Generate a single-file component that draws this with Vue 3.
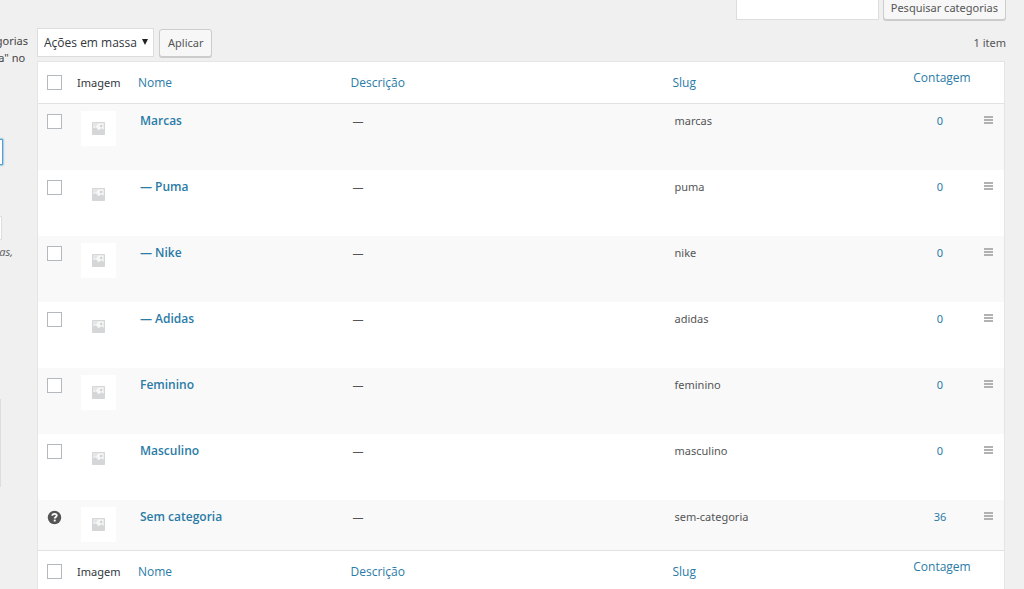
<script setup>
import { ref } from 'vue'

const bulkAction = ref('-1')
const search = ref('')
const selected = ref([])

const categories = [
  { name: 'Marcas', slug: 'marcas', count: 0 },
  { name: '— Puma', slug: 'puma', count: 0 },
  { name: '— Nike', slug: 'nike', count: 0 },
  { name: '— Adidas', slug: 'adidas', count: 0 },
  { name: 'Feminino', slug: 'feminino', count: 0 },
  { name: 'Masculino', slug: 'masculino', count: 0 },
  { name: 'Sem categoria', slug: 'sem-categoria', count: 36, isDefault: true }
]

// Select or clear every category that can be removed
function toggleAll(event) {
  selected.value = event.target.checked
    ? categories.filter((c) => !c.isDefault).map((c) => c.slug)
    : []
}
</script>

<template>
  <div class="page">
    <!-- Form column, scrolled almost out of view -->
    <aside class="form-col">
      <p class="intro">gorias<br />a" no&nbsp;</p>
      <input class="field focused" type="text" aria-label="Nome" />
      <input class="field slug-field" type="text" aria-label="Slug" />
      <p class="hint">as,</p>
      <textarea class="field area" aria-label="Descrição"></textarea>
    </aside>

    <main class="list-col">
      <form class="search-box" @submit.prevent>
        <input v-model="search" type="search" aria-label="Pesquisar categorias" />
        <button class="button" type="submit">Pesquisar categorias</button>
      </form>

      <div class="tablenav">
        <span class="select-wrap">
          <select v-model="bulkAction" aria-label="Selecionar ação em massa">
            <option value="-1">Ações em massa</option>
            <option value="delete">Excluir</option>
          </select>
        </span>
        <button class="button apply" type="button">Aplicar</button>
        <span class="total">1 item</span>
      </div>

      <table>
        <colgroup>
          <col class="c-check" />
          <col class="c-image" />
          <col class="c-name" />
          <col />
          <col class="c-slug" />
          <col class="c-count" />
          <col class="c-handle" />
        </colgroup>
        <thead>
          <tr>
            <th class="check"><input type="checkbox" aria-label="Selecionar tudo" @change="toggleAll" /></th>
            <th class="image">Imagem</th>
            <th><a href="#">Nome</a></th>
            <th><a href="#">Descrição</a></th>
            <th><a href="#">Slug</a></th>
            <th class="count"><a href="#">Contagem</a></th>
            <th></th>
          </tr>
        </thead>
        <tbody>
          <tr v-for="cat in categories" :key="cat.slug">
            <td class="check">
              <svg v-if="cat.isDefault" class="help" viewBox="0 0 14 14" role="img" aria-label="Ajuda">
                <circle cx="7" cy="7" r="6.3" fill="#555" />
                <path d="M5 5.400C5 4.100 5.800 3.600 7 3.600s2.100.6 2.100 1.600C9.100 6.500 7.200 6.500 7.200 8" fill="none" stroke="#fff" stroke-width="1.700" />
                <rect x="6.300" y="9" width="1.800" height="1.700" fill="#fff" />
              </svg>
              <input v-else v-model="selected" type="checkbox" :value="cat.slug" :aria-label="'Selecionar ' + cat.name" />
            </td>
            <td class="image">
              <span class="thumb">
                <svg viewBox="0 0 13 13" aria-hidden="true">
                  <rect width="13" height="13" rx="0.800" fill="#d5d6d8" />
                  <path d="M1.300 1.300h10.400v6.400L9.300 6.300 6.700 8.300 3.800 5.300 1.300 6.300z" fill="#f7f7f8" />
                  <path d="M1.300 1.300h5L4.300 4.300 1.300 5z" fill="#e3e4e6" />
                  <circle cx="9.200" cy="4" r="1.300" fill="#d0d1d3" />
                </svg>
              </span>
            </td>
            <td class="name"><a href="#">{{ cat.name }}</a></td>
            <td>—</td>
            <td>{{ cat.slug }}</td>
            <td class="count"><a href="#">{{ cat.count }}</a></td>
            <td class="handle">
              <svg viewBox="0 0 9 8" aria-hidden="true">
                <path d="M0 1h9M0 4h9M0 7h9" stroke="#999" stroke-width="1.700" />
              </svg>
            </td>
          </tr>
        </tbody>
        <tfoot>
          <tr>
            <th class="check"><input type="checkbox" aria-label="Selecionar tudo" @change="toggleAll" /></th>
            <th class="image">Imagem</th>
            <th><a href="#">Nome</a></th>
            <th><a href="#">Descrição</a></th>
            <th><a href="#">Slug</a></th>
            <th class="count"><a href="#">Contagem</a></th>
            <th></th>
          </tr>
        </tfoot>
      </table>
    </main>
  </div>
</template>

<style>
body {
  background: #f0f0f0;
}
</style>

<style scoped>
* {
  box-sizing: border-box;
}
.page {
  display: flex;
  height: 100vh;
  overflow: hidden;
  background: #f0f0f0;
  color: #555;
  font-family: "Noto Sans", "Open Sans", sans-serif;
  font-size: 11px;
  line-height: 17px;
}
.form-col {
  display: flex;
  flex-direction: column;
  align-items: flex-end;
  flex: 0 0 37px;
  overflow: hidden;
}
p {
  margin: 0;
}
.intro {
  margin-top: 32px;
  padding-right: 9px;
  text-align: right;
  color: #444;
}
.field {
  width: 100px;
  height: 26px;
  margin: 73px 34px 0 0;
  border: 1px solid #ddd;
  background: #fff;
}
.focused {
  border-color: #5b9dd9;
  box-shadow: 0 0 2px #1e8cbe;
}
.slug-field {
  height: 24px;
  margin: 51px 35px 0 0;
}
.hint {
  margin-top: 3px;
  padding-right: 24px;
  font-style: italic;
  color: #666;
}
.area {
  flex-shrink: 0;
  height: 88px;
  margin: 139px 36px 0 0;
  resize: none;
}
.list-col {
  flex: 1;
  min-width: 0;
  padding-right: 18px;
}
.search-box {
  display: flex;
  justify-content: flex-end;
  align-items: flex-end;
  gap: 4px;
  height: 20px;
}
.search-box input {
  flex: none;
  width: 143px;
  height: 26px;
  border: 1px solid #ddd;
  background: #fff;
}
.button {
  flex: none;
  height: 26px;
  padding: 0 7px;
  border: 1px solid #ccc;
  border-radius: 3px;
  background: #f7f7f7;
  box-shadow: 0 1px 0 #ccc;
  color: #555;
  font: inherit;
}
.tablenav {
  display: flex;
  align-items: center;
  margin: 8px 0 4px;
}
.select-wrap {
  position: relative;
  width: 117px;
}
.select-wrap::after {
  content: "";
  position: absolute;
  right: 6px;
  top: 11px;
  border: 3px solid transparent;
  border-top: 6px solid #222;
  pointer-events: none;
}
select {
  display: block;
  width: 100%;
  height: 29px;
  padding: 0 6px;
  border: 1px solid #ddd;
  border-radius: 0;
  background: #fff;
  color: #32373c;
  font-family: "Open Sans", sans-serif;
  font-size: 12px;
  appearance: none;
}
.apply {
  height: 28px;
  margin-left: 5px;
  padding: 0 8px;
}
.total {
  margin-left: auto;
}
table {
  width: calc(100% - 1px);
  table-layout: fixed;
  border: 1px solid #e5e5e5;
  border-collapse: separate;
  border-spacing: 0;
  background: #fff;
}
.c-check {
  width: 32px;
}
.c-image {
  width: 60px;
}
.c-name {
  width: 22%;
}
.c-slug {
  width: 25%;
}
.c-count {
  width: 72px;
}
.c-handle {
  width: 26px;
}
th {
  height: 42px;
  padding: 0 8px;
  font-weight: 400;
  text-align: left;
  vertical-align: middle;
  color: #32373c;
}
thead th {
  border-bottom: 1px solid #e1e1e1;
}
tfoot th {
  border-top: 1px solid #e1e1e1;
}
td {
  height: 66px;
  padding: 8px 10px;
  vertical-align: top;
}
tbody tr:nth-child(odd) {
  background: #f9f9f9;
}
tbody tr:last-child td {
  height: 50px;
}
a {
  color: #2a7ba6;
  text-decoration: none;
}
th a,
.name a {
  font-family: "Open Sans", sans-serif;
  font-size: 12px;
}
.name a {
  font-weight: 600;
}
th.image {
  padding: 0 0 0 7px;
}
td.image {
  padding: 7px 0 0 11px;
}
.check {
  padding-right: 0;
  padding-left: 9px;
}
td.check {
  padding-top: 10px;
}
.check input {
  display: block;
  width: 15px;
  height: 15px;
  margin: 0;
  border: 1px solid #b4b9be;
  background: #fff;
  appearance: none;
}
.check input:checked {
  background: #1e8cbe;
}
.help {
  display: block;
  width: 15px;
  height: 15px;
}
.thumb {
  display: flex;
  align-items: center;
  justify-content: center;
  width: 35px;
  height: 35px;
  background: #fff;
}
.thumb svg {
  width: 13px;
  height: 13px;
}
th.count {
  padding: 0 0 10px;
  text-align: center;
}
td.count {
  padding-right: 14px;
  text-align: center;
}
.handle {
  padding: 12px 0 0 6px;
}
.handle svg {
  display: block;
  width: 9px;
  height: 8px;
}
</style>
